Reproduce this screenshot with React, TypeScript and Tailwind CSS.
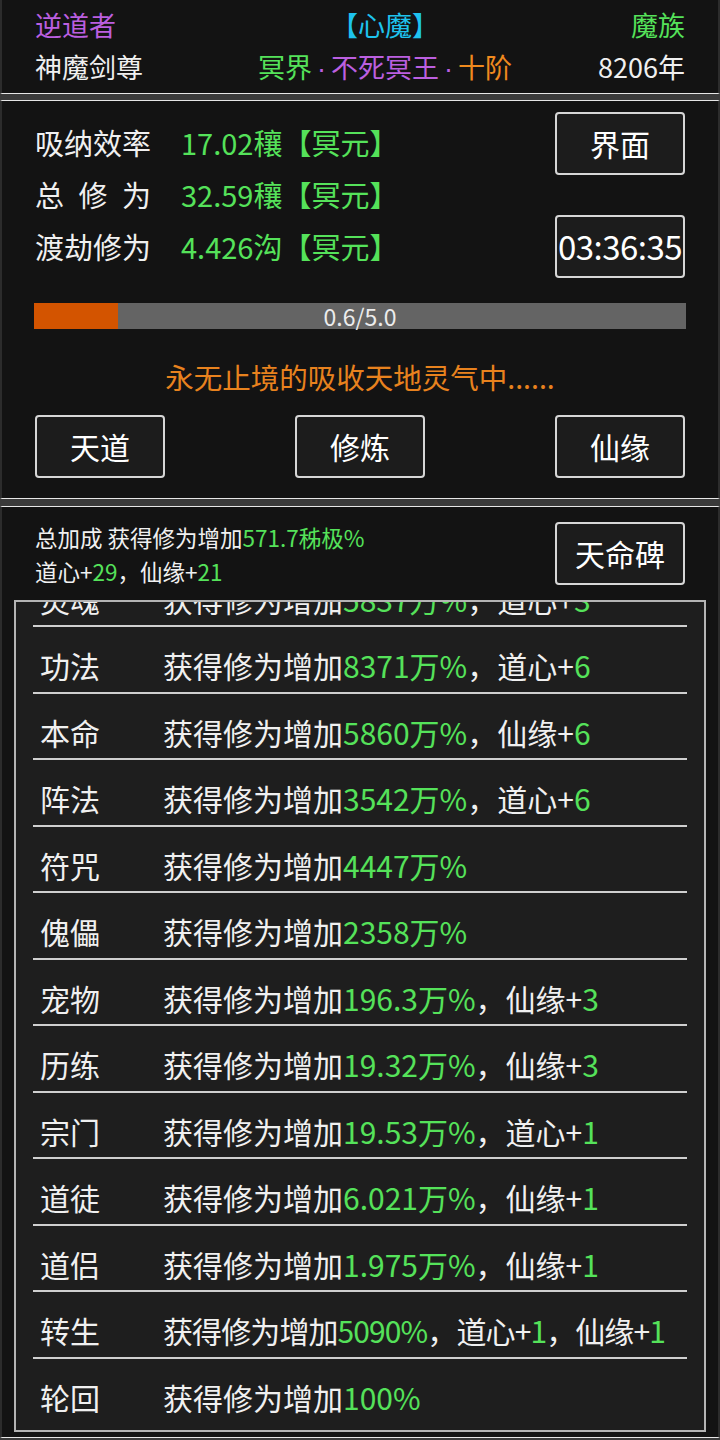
import React from 'react';

const G = ({ children }: { children: React.ReactNode }) => <span className="text-[#55e25a]">{children}</span>;

const Dot = () => <span className="inline-block w-[19px] text-center font-['Liberation_Sans',sans-serif]">·</span>;

type Row = { name: string; parts: React.ReactNode; tight?: boolean };

const rows: Row[] = [
    { name: '灵魂', parts: <>获得修为增加<G>5837万%</G>，道心+<G>3</G></> },
    { name: '功法', parts: <>获得修为增加<G>8371万%</G>，道心+<G>6</G></> },
    { name: '本命', parts: <>获得修为增加<G>5860万%</G>，仙缘+<G>6</G></> },
    { name: '阵法', parts: <>获得修为增加<G>3542万%</G>，道心+<G>6</G></> },
    { name: '符咒', parts: <>获得修为增加<G>4447万%</G></> },
    { name: '傀儡', parts: <>获得修为增加<G>2358万%</G></> },
    { name: '宠物', parts: <>获得修为增加<G>196.3万%</G>，仙缘+<G>3</G></> },
    { name: '历练', parts: <>获得修为增加<G>19.32万%</G>，仙缘+<G>3</G></> },
    { name: '宗门', parts: <>获得修为增加<G>19.53万%</G>，道心+<G>1</G></> },
    { name: '道徒', parts: <>获得修为增加<G>6.021万%</G>，仙缘+<G>1</G></> },
    { name: '道侣', parts: <>获得修为增加<G>1.975万%</G>，仙缘+<G>1</G></> },
    { name: '转生', parts: <>获得修为增加<G>5090%</G>，道心+<G>1</G>，仙缘+<G>1</G></>, tight: true },
    { name: '轮回', parts: <>获得修为增加<G>100%</G></> },
];

const Btn = ({ children, className = '' }: { children: React.ReactNode; className?: string }) => (
    <div className={`w-[130px] h-[63px] shrink-0 flex items-center justify-center bg-[#1c1c1c] border-2 border-[#d6d6d6] rounded-[4px] text-white text-[30px] ${className}`}>
        {children}
    </div>
);

export default function App() {
    return (
        <div className="w-[720px] h-[1440px] bg-[#3a3a3a] font-['Noto_Sans_CJK_SC',sans-serif] text-[#f0f0f0] overflow-hidden">
            {/* header panel */}
            <div className="h-[94px] bg-[#131313] border-x-2 border-x-[#2c2c2c] border-b border-b-[#e6e6e6] px-[33px] pt-[4px] text-[27px] leading-[42px]">
                <div className="flex">
                    <div className="w-[160px] text-[#bb5fe0]">逆道者</div>
                    <div className="flex-1 text-center text-[#1ec3ee]">【心魔】</div>
                    <div className="w-[110px] text-right text-[#55e25a]">魔族</div>
                </div>
                <div className="flex">
                    <div className="w-[160px]">神魔剑尊</div>
                    <div className="flex-1 text-center">
                        <span className="text-[#55e25a]">冥界</span>
                        <span className="text-[#bb5fe0]"><Dot />不死冥王<Dot /></span>
                        <span className="text-[#f08a1e]">十阶</span>
                    </div>
                    <div className="w-[110px] text-right">8206年</div>
                </div>
            </div>

            <div className="h-[6px]" />

            {/* cultivation panel */}
            <div className="h-[399px] bg-[#131313] border-x-2 border-x-[#2c2c2c] border-y border-y-[#e6e6e6] px-[33px] pt-[11px]">
                <div className="flex justify-between">
                    <div className="pt-[3.5px] text-[29px] leading-[52px]">
                        <div className="flex">
                            <span className="w-[146px]">吸纳效率</span>
                            <G>17.02穰【冥元】</G>
                        </div>
                        <div className="flex">
                            <span className="w-[146px] flex"><span className="w-[116px] flex justify-between"><span>总</span><span>修</span><span>为</span></span></span>
                            <G>32.59穰【冥元】</G>
                        </div>
                        <div className="flex">
                            <span className="w-[146px]">渡劫修为</span>
                            <G>4.426沟【冥元】</G>
                        </div>
                    </div>
                    <div className="flex flex-col gap-[40px]">
                        <Btn>界面</Btn>
                        <Btn className="text-[33px] tracking-[-0.5px]">03:36:35</Btn>
                    </div>
                </div>

                <div className="relative -mx-px mt-[25px] h-[26px] bg-[#646464]">
                    <div className="absolute left-0 top-0 h-full w-[84px] bg-[#d35400]" />
                    <div className="relative text-center text-[23px] leading-[26px] text-[#ececec]">0.6/5.0</div>
                </div>

                <div className="mt-[28px] text-center text-[28.5px] leading-[40px] text-[#e8821e]">永无止境的吸收天地灵气中......</div>

                <div className="mt-[18px] flex justify-between">
                    <Btn>天道</Btn>
                    <Btn>修炼</Btn>
                    <Btn>仙缘</Btn>
                </div>
            </div>

            <div className="h-[7px]" />

            {/* bonus panel */}
            <div className="h-[932px] bg-[#131313] border-x-2 border-x-[#2c2c2c] border-y border-y-[#e6e6e6]">
                <div className="h-[93px] flex justify-between px-[33px] pt-[13px]">
                    <div className="text-[22.5px] leading-[34px]">
                        <div>总加成 获得修为增加<G>571.7秭极%</G></div>
                        <div>道心+<G>29</G>，仙缘+<G>21</G></div>
                    </div>
                    <Btn className="mt-[2px]">天命碑</Btn>
                </div>

                <div className="mx-[12px] h-[832px] bg-[#1e1e1e] border-2 border-[#b4b4b4] overflow-hidden flex flex-col justify-end pb-[7px]">
                    {rows.map((r, i) => (
                        <div
                            key={r.name}
                            className={`mx-[17px] shrink-0 flex pl-[7px] pt-[16px] pb-[3.5px] text-[30px] leading-[45px] whitespace-nowrap ${i < rows.length - 1 ? 'border-b-2 border-b-[#cfcfcf]' : ''}`}
                        >
                            <span className="w-[123px] shrink-0">{r.name}</span>
                            <span className={r.tight ? 'tracking-[-0.9px]' : ''}>{r.parts}</span>
                        </div>
                    ))}
                </div>
            </div>
        </div>
    );
}
